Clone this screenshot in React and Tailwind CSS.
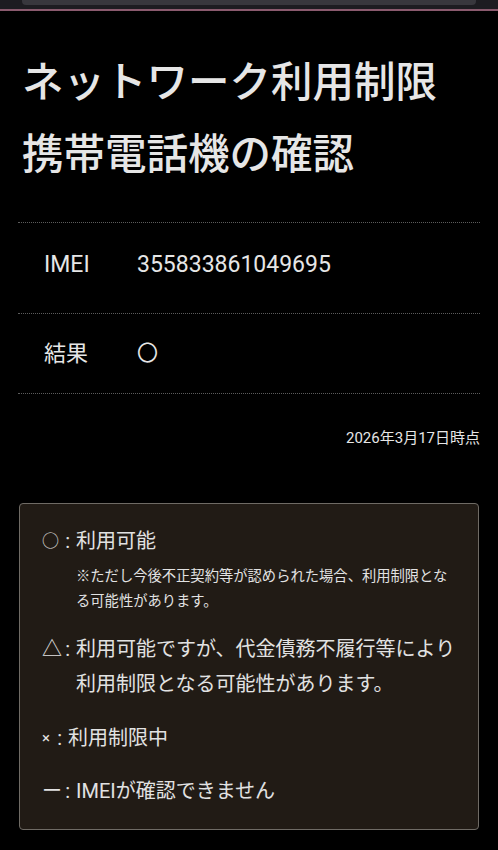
export default function App() {
  const font = { fontFamily: 'Roboto, "Noto Sans CJK JP", sans-serif' };

  return (
    <div className="min-h-[850px] bg-black text-[#e6e6e6]" style={font}>
      {/* browser chrome edge */}
      <div className="h-[9px] bg-[#1d1c21]">
        <div className="mx-[22px] h-[5px] rounded-b-[4px] bg-[#38373d]" />
      </div>
      <div className="h-[2px] bg-[#8a5a6e]" />

      {/* heading */}
      <h1 className="px-[22px] pt-[36px] text-[41.5px] font-medium leading-[72px] text-[#e6e6e6]">
        ネットワーク利用制限
        <br />
        携帯電話機の確認
      </h1>

      {/* result table */}
      <div className="mx-[18px] mt-[31px]">
        <div className="flex h-[91px] items-center border-t border-dotted border-[#5c5c5c] pb-[6px] pl-[26px] text-[23px]">
          <span className="w-[93px]">IMEI</span>
          <span>355833861049695</span>
        </div>
        <div className="flex h-[80px] items-center border-t border-dotted border-[#5c5c5c] pl-[26px] text-[22px]">
          <span className="w-[93px]">結果</span>
          <span className="text-[21px]">〇</span>
        </div>
        <div className="border-t border-dotted border-[#5c5c5c]" />
        <p className="mt-[34px] text-right text-[15px] leading-[20px]">2026年3月17日時点</p>
      </div>

      {/* legend */}
      <div className="mx-[19px] mt-[55px] rounded-[4px] border border-[#6f6b65] bg-[#211b15] px-[22px] pt-[22px] pb-[23px] text-[20px] text-[#e2e2e2]">
        <div className="flex leading-[30px]">
          <span className="flex w-[34px] shrink-0 justify-between pr-[6px]">
            <span className="text-[17px] font-light">○</span>
            <span>:</span>
          </span>
          <span>利用可能</span>
        </div>
        <p className="mt-[8px] pl-[34px] text-[14.3px] leading-[25px]">
          ※ただし今後不正契約等が認められた場合、利用制限とな
          <br />
          る可能性があります。
        </p>

        <div className="mt-[18px] flex leading-[35px]">
          <span className="flex w-[34px] shrink-0 justify-between pr-[6px]">
            <span>△</span>
            <span>:</span>
          </span>
          <span>利用可能ですが、代金債務不履行等により利用制限となる可能性があります。</span>
        </div>

        <div className="mt-[21px] flex leading-[30px]">
          <span className="flex w-[26px] shrink-0 justify-between pr-[6px]">
            <span className="text-[15px]">×</span>
            <span>:</span>
          </span>
          <span>利用制限中</span>
        </div>

        <div className="mt-[23px] flex leading-[30px]">
          <span className="flex w-[34px] shrink-0 justify-between pr-[6px]">
            <span>ー</span>
            <span>:</span>
          </span>
          <span>IMEIが確認できません</span>
        </div>
      </div>
    </div>
  );
}
